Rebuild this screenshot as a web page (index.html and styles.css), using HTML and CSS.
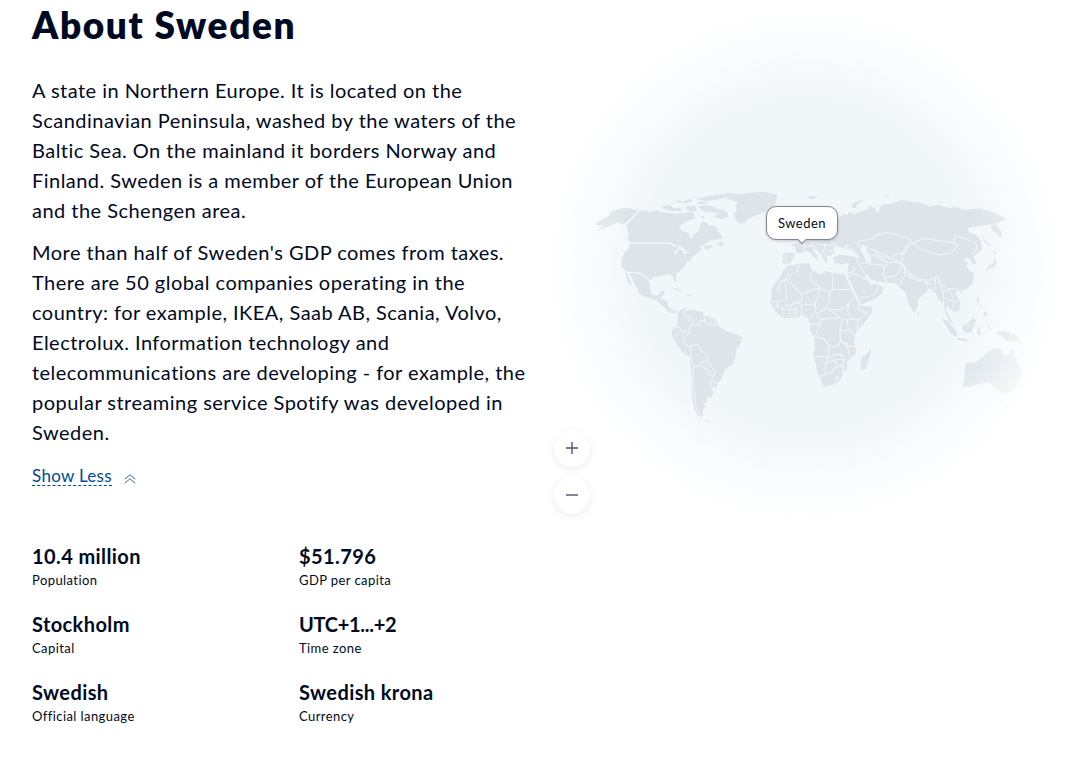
FILE: index.html
```html
<!DOCTYPE html>
<html lang="en">
<head>
  <meta charset="UTF-8" />
  <meta name="viewport" content="width=device-width, initial-scale=1.0" />
  <title>About Sweden</title>
  <link rel="stylesheet" href="styles.css">
</head>
<body>
  <section class="about">
    <div class="info">
      <h1>About Sweden</h1>
      <p>A state in Northern Europe. It is located on the<br>
        Scandinavian Peninsula, washed by the waters of the<br>
        Baltic Sea. On the mainland it borders Norway and<br>
        Finland. Sweden is a member of the European Union<br>
        and the Schengen area.</p>
      <p>More than half of Sweden's GDP comes from taxes.<br>
        There are 50 global companies operating in the<br>
        country: for example, IKEA, Saab AB, Scania, Volvo,<br>
        Electrolux. Information technology and<br>
        telecommunications are developing - for example, the<br>
        popular streaming service Spotify was developed in<br>
        Sweden.</p>
      <a class="toggle" href="#">
        <span class="toggle-text">Show Less</span>
        <svg class="toggle-icon" width="12" height="10" viewBox="0 0 12 10">
          <path d="M.8 5.2 6 .8l5.2 4.4M.8 9.2 6 4.8l5.2 4.4" />
        </svg>
      </a>

      <dl class="facts">
        <div class="fact"><dt>10.4 million</dt><dd>Population</dd></div>
        <div class="fact"><dt>$51.796</dt><dd>GDP per capita</dd></div>
        <div class="fact"><dt>Stockholm</dt><dd>Capital</dd></div>
        <div class="fact"><dt class="tight">UTC+1...+2</dt><dd>Time zone</dd></div>
        <div class="fact"><dt>Swedish</dt><dd>Official language</dd></div>
        <div class="fact"><dt>Swedish krona</dt><dd>Currency</dd></div>
      </dl>
    </div>

    <div class="map">
      <svg class="world" width="536" height="540" viewBox="0 0 536 540">
        <defs>
          <radialGradient id="fade" gradientUnits="userSpaceOnUse" cx="260" cy="262" r="262">
            <stop offset=".68" stop-color="#fff" />
            <stop offset=".8" stop-color="#fff" stop-opacity=".7" />
            <stop offset="1" stop-color="#fff" stop-opacity="0" />
          </radialGradient>
          <mask id="edge"><rect width="536" height="540" fill="url(#fade)" /></mask>
        </defs>
        <g mask="url(#edge)">
          <!-- North America -->
          <g transform="translate(50 185) scale(.33333)">
            <path class="land" d="M16 118 30 106 50 96 62 86 60 80 85 73 105 69 125 71 146 77 103 118 92 115 80 112 70 118 58 124 42 130 28 136 20 138 34 128 44 121 30 122Z" />
            <path class="land" d="M150 77 165 76 180 82 200 75 215 82 235 84 255 86 280 84 300 82 314 86 312 95 318 98 303 104 285 112 270 123 268 132 282 140 298 146 300 160 306 161 312 148 326 140 330 124 334 112 342 110 352 114 358 124 372 120 380 132 392 148 398 158 382 164 360 166 345 176 332 186 308 196 298 204 290 200 280 188 262 180 250 178 240 172H120L112 160 118 150 112 140 115 130 108 122Z" />
            <path class="land" d="M118 176H240L250 184 264 184 268 190 256 196 252 210 260 206 266 192 276 196 280 206 290 206 300 202 315 192 332 188 340 192 325 200 318 208 308 214 302 226 288 232 288 240 270 258 258 268 259 292 253 290 248 272 235 268 220 270 210 274 192 276 180 288 172 276 160 268 150 262 130 262 106 259 95 244 94 224 104 200 119 188Z" />
            <path class="land" d="M118 264 150 266 162 272 172 282 179 294 180 310 184 328 198 332 208 328 212 318 224 318 222 328 214 336 202 344 195 346 180 340 160 334 146 324 140 306 130 290 124 276ZM106 264 114 268 118 284 126 302 120 302 112 286ZM246 308 262 310 280 322 268 318 256 313ZM288 326 306 330 302 334 288 332Z" />
            <path class="land" d="M222 62 240 60 250 70 275 70 270 78 245 78 225 72 214 68ZM255 45 275 50 300 42 310 48 290 54 262 54ZM322 64 350 60 372 66 380 72 400 74 414 84 412 98 396 102 380 98 370 94 385 88 365 80 345 80 330 72ZM315 42 360 32 410 25 448 26 410 36 380 44 350 48ZM325 50 350 50 345 58 320 56ZM290 64 315 62 322 78 300 80 288 72ZM245 52 252 54 246 57ZM330 92 345 94 340 102ZM380 176 392 168 402 178 396 186ZM342 184 360 180 372 186 356 192 346 194Z" />
            <path class="land" d="M202 346 216 344 232 350 236 368 248 374 262 378 256 381 240 378 226 364 212 354Z" />
          </g>

          <!-- South America -->
          <g transform="translate(120 300) scale(.33333)">
            <path class="land" d="M54 40 70 24 80 24 78 34 88 30 108 32 126 34 132 46 150 52 166 56 172 76 186 86 206 96 228 102 246 112 244 126 230 146 226 172 218 192 194 208 188 228 176 250 168 262 152 264 160 276 155 290 140 292 142 304 132 312 138 320 128 328 130 340 126 354 112 346 104 330 98 300 96 250 94 210 90 172 68 158 52 134 36 108 38 84 52 74ZM132 356 152 366 140 366Z" />
            <path class="border" d="M74 28 72 44 84 52 98 56 100 74 88 80 90 98 70 118 78 136 92 138V172L102 200 98 230 104 280 108 320 120 346 128 352M38 86 56 80 66 92 50 104 42 108M66 92 90 98M98 74 118 76 116 64 134 60 132 44M134 60 140 72 170 76M152 54V72M164 56V72M94 138 112 134 120 150 140 164 144 182 126 186 122 198 102 200M144 184 158 206 166 216 164 226 148 224 150 214 122 198M164 226 152 242 178 252M152 242V262" />
          </g>

          <!-- everything else shares one grid -->
          <g transform="scale(.3416 .3438)">
            <!-- Greenland and the Arctic islands -->
            <path class="land" d="M540 578 570 566 610 562 650 558 695 566 690 592 678 608 662 614 630 628 608 636 600 648 582 650 572 640 568 622 576 612 572 600 580 590 560 582ZM780 572 800 570 815 572 795 580ZM912 605 915 592 935 584 950 583 930 592 924 604ZM1005 566 1027 572 1015 574ZM1158 585 1182 587 1172 590Z" />
            <path class="land" d="M340 865 365 872 375 880 372 895 385 908 405 905 398 911 380 910 362 892 345 878Z" />

            <!-- Europe -->
            <path class="land" d="M712 738 722 734 746 737 742 752 732 765 718 768 710 764ZM735 712 755 706 765 696 870 688 885 696 904 702 900 714 885 722 868 714 858 720 862 735 850 742 840 745 842 765 835 762 825 742 812 728 802 722 800 730 812 744 812 758 806 752 792 735 780 730 765 736 748 734 750 720ZM858 748 875 742 895 742 920 746 930 755 925 764 900 766 880 768 862 764Z" />
            <path class="border" d="M720 740V764M775 708 772 730M772 718 795 714 812 720M795 714 800 704 830 700M812 710 835 712 832 728M835 712 858 714M838 728 860 732M825 725 838 745M850 700 868 714M800 704 790 700" />

            <!-- Asia -->
            <path class="land" d="M866 640 890 622 900 626 905 616 920 622 950 612 965 608 960 600 975 602 985 612 990 622 995 605 1000 596 1030 592 1060 582 1085 586 1110 590 1140 600 1165 596 1200 604 1220 602 1240 610 1290 606 1310 612 1335 620 1366 638 1350 645 1330 650 1350 672 1352 694 1335 680 1320 665 1322 652 1300 656 1280 658 1255 662 1255 678 1275 682 1290 700 1295 725 1282 735 1268 745 1278 765 1270 770 1262 758 1252 748 1238 755 1252 765 1248 775 1270 800 1266 825 1250 840 1230 848 1215 850 1218 860 1230 880 1228 900 1215 908 1200 898 1192 888 1188 900 1200 925 1210 943 1198 935 1188 912 1182 885 1165 870 1158 852 1140 838 1130 850 1108 870 1104 895 1094 908 1080 885 1070 850 1055 838 1040 824 1010 822 985 818 965 812 955 800 950 805 970 830 985 824 1006 838 1000 855 975 872 940 886 930 865 915 835 902 805 900 778 905 765 930 762 935 745 912 725 895 722 905 714 900 700 866 688Z" />
            <path class="sea" d="M942 712 960 718 955 730 968 745 970 765 955 762 948 745 938 728Z" />
            <path class="border" d="M930 724 935 700 975 695 980 685 1010 676 1045 682 1075 692 1090 708 1075 715 1070 735 1040 740 1030 752 1010 742 975 725 965 725M1090 708 1125 694 1170 700 1210 706 1222 712 1205 735 1170 742 1120 728 1090 708M1210 706 1215 684 1245 695 1275 705 1280 725 1265 738M1075 715 1060 740 1060 765 1080 795 1110 812 1140 815 1165 805 1172 825 1195 842 1215 838 1232 850M930 764 950 795 970 812M935 765 970 768 1005 770 1005 790 1015 824M1005 780 1020 765 1050 762 1062 770 1050 795 1035 805 1010 805M1065 772 1070 800 1050 830M970 740 1000 755 1020 765M1030 752 1050 762M975 725 985 740 1015 752M902 805 925 795 955 815M922 770 918 790 902 795M940 868 975 858 990 840 985 826M1085 795 1080 805 1105 816 1135 822M1135 840 1130 820 1148 828M1158 810 1155 845M1172 825 1180 850 1182 885M1180 850 1200 845 1210 870 1225 880M1190 868 1215 878 1205 895" />
            <path class="land" d="M1104 902 1111 912 1108 919ZM1326 728 1336 736 1328 740ZM1328 742 1337 765 1330 778 1312 782 1308 792 1304 784 1318 770 1328 764ZM1292 682 1300 695 1320 718 1312 715 1298 700ZM1175 922 1190 932 1218 962 1220 980 1205 972 1190 948ZM1220 982 1245 985 1262 992 1240 992 1222 988ZM1238 945 1255 938 1268 922 1276 932 1270 950 1262 968 1245 966 1236 956ZM1282 955 1296 951 1286 959 1294 971 1288 969 1284 979 1281 966ZM1280 860 1286 870 1284 884 1279 876ZM1298 905 1308 909 1310 919 1300 919ZM1286 885 1296 893 1294 899ZM1228 850 1236 850 1231 856ZM1310 945 1322 958 1312 955ZM1338 965 1355 962 1375 966 1395 975 1402 988 1415 1002 1395 992 1380 996 1365 990 1350 978 1340 972Z" />
            <path class="border" d="M1378 966V998M1240 945 1256 948 1268 936" />

            <!-- Africa -->
            <path class="land" d="M722 774 745 770 765 766 790 766 792 782 802 790 825 798 835 788 855 794 880 798 892 798 900 815 915 850 925 870 938 890 972 892 970 910 955 932 930 960 922 975 920 1000 926 1020 922 1032 905 1044 898 1055 900 1072 886 1085 880 1105 860 1118 830 1125 824 1108 812 1085 808 1060 800 1035 806 1010 802 980 790 960 792 942 785 925 765 916 750 924 712 926 695 912 682 895 674 878 680 855 676 845 690 820 705 805 712 788ZM942 1040 958 1028 968 1014 966 1035 952 1074 942 1077 938 1062Z" />
            <path class="border" d="M758 770 752 790 720 806 718 815 722 872 690 876M690 842H702L704 820 718 815M718 808 766 856 788 848 820 836 796 820 790 792M766 856V875L745 880 735 890 722 885 710 898 696 890 690 876 676 878M766 885 806 884 812 862 818 838 848 850 846 880 838 895 880 925 850 925 822 930 808 915M856 796V842H908M856 842 848 850M766 886V916M806 884 808 900 792 925M808 912 822 906 838 895M848 898 870 902 895 895 905 880 918 868M905 880 900 905 918 930 935 930 958 910 935 900 930 885M930 932V960M900 930 902 955 922 975M792 942H815M822 930 815 960 802 980 832 985 845 1005 870 1010 880 990 878 960 885 930 918 930M845 1005V1038L802 1036M845 1040 835 1060V1090L818 1095M835 1060 865 1045 892 1045M865 1045 868 1068 845 1088 835 1088M848 1036 878 1030 892 1045 885 1062 868 1068M870 1010 880 995 900 1000 905 1035M880 990 900 1008 924 1008M868 1068 888 1064 886 1085M864 1100 870 1095 875 1100 869 1105ZM684 896 696 890M710 898V924M710 900 732 902 755 895M732 890V922M745 900V922M752 895V920M745 880 762 884M878 960 900 962" />
          </g>

          <!-- Australia -->
          <path class="land" transform="translate(350 280) scale(.33333)" d="M226 262 228 250 258 246 276 232 292 218 308 206 330 206 336 212 332 218 350 228 362 218 366 202 376 228 384 246 396 270 394 290 380 320 362 336 345 342 330 338 318 322 308 318 300 308 280 308 255 314 240 320 218 322 222 300ZM326 360H336L331 368Z" />
        </g>
      </svg>

      <div class="tooltip">Sweden</div>

      <div class="zoom">
        <button class="zoom-btn" aria-label="Zoom in">
          <svg width="12" height="12" viewBox="0 0 12 12"><path d="M6 0v12M0 6h12" /></svg>
        </button>
        <button class="zoom-btn" aria-label="Zoom out">
          <svg width="12" height="12" viewBox="0 0 12 12"><path d="M0 6h12" /></svg>
        </button>
      </div>
    </div>
  </section>
</body>
</html>
```
FILE: styles.css
```css
body {
  margin: 0;
  background: #fff;
  color: #000a23;
  font-family: Lato, "Open Sans", sans-serif;
  overflow: hidden;
}
.about {
  display: grid;
  grid-template-columns: 540px 536px;
  height: 758px;
}
.info {
  padding: 1px 0 0 32px;
}
h1 {
  margin: 0 0 26px;
  font-size: 37px;
  line-height: 48px;
  font-weight: 800;
  letter-spacing: 1.6px;
}
p {
  margin: 0 0 12px;
  font-size: 20px;
  line-height: 30px;
  letter-spacing: 0.47px;
  white-space: nowrap;
}
.toggle {
  display: flex;
  align-items: center;
  gap: 12px;
  margin-top: 20px;
  color: #004b93;
  font-size: 17px;
  line-height: 18px;
  letter-spacing: 0.3px;
  text-decoration: none;
}
.toggle-text {
  border-bottom: 1px dashed #004b93;
}
.toggle-icon {
  margin-top: 4px;
  fill: none;
  stroke: #3f72ab;
}
.facts {
  display: grid;
  grid-template-columns: 267px 1fr;
  row-gap: 20px;
  margin: 56px 0 0;
}
.fact dt {
  font-size: 20px;
  line-height: 28px;
  font-weight: bold;
  letter-spacing: 0.4px;
}
.fact .tight {
  letter-spacing: -0.3px;
}
.fact dd {
  margin: 0;
  font-size: 13px;
  line-height: 20px;
  letter-spacing: 0.42px;
}
.map {
  position: relative;
  height: 540px;
  background: radial-gradient(circle 258px at 265px 265px, #f1f6f9 62%, rgba(241, 246, 249, 0.5) 80%, rgba(241, 246, 249, 0) 100%);
}
.world {
  display: block;
}
.land {
  fill: #dde4ea;
}
.sea {
  fill: #f1f6f9;
}
.border {
  fill: none;
  stroke: #f1f6f9;
  stroke-width: 3;
  stroke-linejoin: round;
}
.tooltip {
  position: absolute;
  left: 226px;
  top: 206px;
  box-sizing: border-box;
  width: 72px;
  height: 34px;
  border: 1px solid #7f8596;
  border-radius: 10px;
  background: #fff;
  box-shadow: 0 1px 3px rgba(0, 10, 35, 0.2);
  font-size: 13px;
  line-height: 32px;
  letter-spacing: 0.5px;
  text-align: center;
}
.tooltip::after {
  content: "";
  position: absolute;
  left: 32px;
  bottom: -4px;
  width: 5px;
  height: 5px;
  border: solid #7f8596;
  border-width: 0 1px 1px 0;
  background: #fff;
  transform: rotate(45deg);
}
.zoom {
  position: absolute;
  left: 14px;
  top: 430px;
  display: flex;
  flex-direction: column;
  gap: 10px;
}
.zoom-btn {
  display: flex;
  align-items: center;
  justify-content: center;
  width: 36px;
  height: 37px;
  padding: 0 0 1px;
  border: none;
  border-radius: 50%;
  background: #fff;
  box-shadow: 0 2px 8px rgba(0, 10, 35, 0.08);
}
.zoom-btn path {
  stroke: #4d546a;
  stroke-width: 1.4;
}
```
